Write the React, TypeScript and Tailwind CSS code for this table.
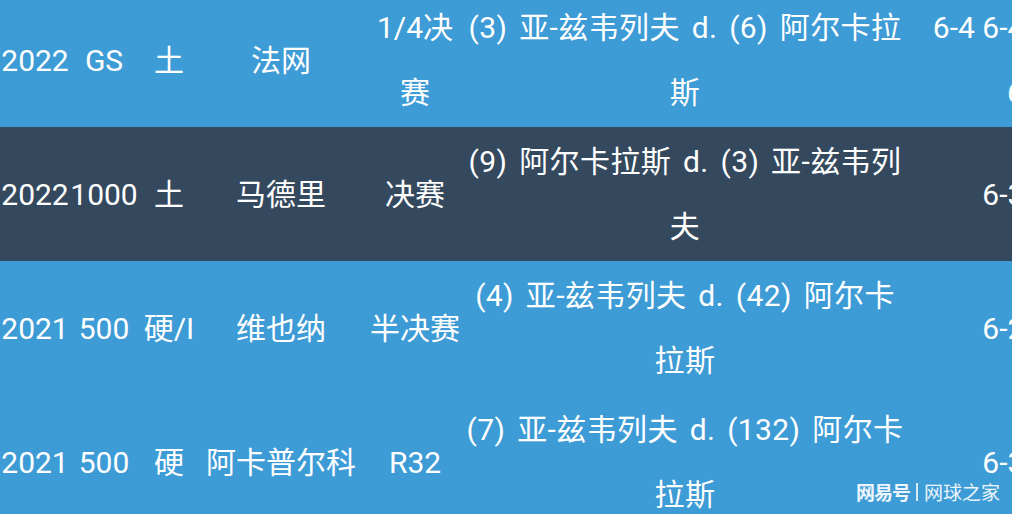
import React from 'react';

interface MatchRow {
  year: string;
  level: string;
  surface: string;
  event: string;
  round: string[];
  match: string[];
  score: string[];
  dark?: boolean;
}

const rows: MatchRow[] = [
  {
    year: '2022',
    level: 'GS',
    surface: '土',
    event: '法网',
    round: ['1/4决', '赛'],
    match: ['(3) 亚-兹韦列夫 d. (6) 阿尔卡拉', '斯'],
    score: ['6-4 6-4 4-6 7-6', '6-7'],
  },
  {
    year: '2022',
    level: '1000',
    surface: '土',
    event: '马德里',
    round: ['决赛'],
    match: ['(9) 阿尔卡拉斯 d. (3) 亚-兹韦列', '夫'],
    score: ['6-3 6-1'],
    dark: true,
  },
  {
    year: '2021',
    level: '500',
    surface: '硬/I',
    event: '维也纳',
    round: ['半决赛'],
    match: ['(4) 亚-兹韦列夫 d. (42) 阿尔卡', '拉斯'],
    score: ['6-2 6-3'],
  },
  {
    year: '2021',
    level: '500',
    surface: '硬',
    event: '阿卡普尔科',
    round: ['R32'],
    match: ['(7) 亚-兹韦列夫 d. (132) 阿尔卡', '拉斯'],
    score: ['6-3 6-1'],
  },
];

function Cell({ lines, className }: { lines: string[]; className: string }) {
  return (
    <div className={`flex flex-col items-center justify-center text-center ${className}`}>
      {lines.map((line, i) => (
        <span key={i} className="whitespace-nowrap">
          {line}
        </span>
      ))}
    </div>
  );
}

export default function App() {
  return (
    <div
      className="relative w-[1012px] h-[514px] overflow-hidden bg-[#3d9bd6] text-white text-[30px] leading-[65px]"
      style={{ fontFamily: 'Roboto, "Noto Sans CJK SC", sans-serif' }}
    >
      <div className="-mt-[7px] w-[1160px]">
        {rows.map((row, idx) => (
          <div
            key={idx}
            className={`flex h-[134px] ${row.dark ? 'bg-[#34495e]' : 'bg-[#3d9bd6]'}`}
          >
            <Cell lines={[row.year]} className="w-[70px]" />
            <Cell lines={[row.level]} className="w-[68px]" />
            <Cell lines={[row.surface]} className="w-[62px]" />
            <Cell lines={[row.event]} className="w-[162px]" />
            <Cell lines={row.round} className="w-[106px]" />
            <Cell lines={row.match} className="w-[434px] [word-spacing:4px] tracking-[0.4px]" />
            <Cell lines={row.score} className="w-[252px]" />
          </div>
        ))}
      </div>

      {/* watermark */}
      <div
        className="absolute right-[12px] bottom-[10px] flex items-center gap-[6px] text-[19px] leading-[24px] text-white/90"
        style={{ fontFamily: '"Noto Sans CJK SC", sans-serif' }}
      >
        <span className="font-bold tracking-[-1px]">网易号</span>
        <span className="w-[2px] h-[18px] bg-white/80" />
        <span>网球之家</span>
      </div>
    </div>
  );
}
